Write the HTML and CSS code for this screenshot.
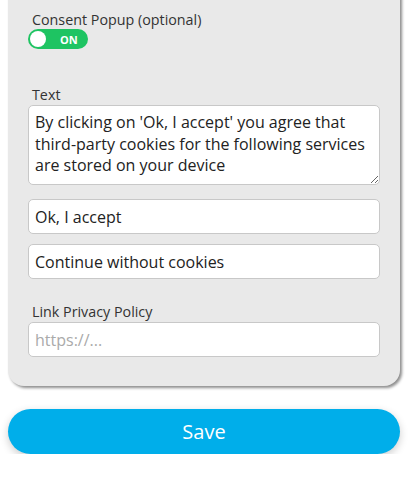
FILE: index.html
```html
<!DOCTYPE html>
<html>
<head>
<meta charset="utf-8">
<link rel="stylesheet" href="styles.css">
</head>
<body>
<div class="panel">
  <div class="field toggle-field">
    <div class="label">Consent Popup (optional)</div>
    <div class="toggle"><span class="knob"></span><span class="on">ON</span></div>
  </div>
  <div class="field text-field">
    <div class="label">Text</div>
    <textarea class="textarea">By clicking on 'Ok, I accept' you agree that third-party cookies for the following services are stored on your device</textarea>
  </div>
  <div class="inputs">
    <input class="input" type="text" value="Ok, I accept">
    <input class="input" type="text" value="Continue without cookies">
  </div>
  <div class="field link-field">
    <div class="label">Link Privacy Policy</div>
    <input class="input" type="text" placeholder="https://...">
  </div>
</div>
<button class="save">Save</button>
</body>
</html>
```
FILE: styles.css
```css
* { box-sizing: border-box; }
html, body { margin: 0; padding: 0; background: #fff; }
body {
  font-family: "Open Sans", "Noto Sans", sans-serif;
  color: #222;
  padding: 0 10px 0 8px;
}
.panel {
  margin-top: -20px;
  background: #e9e9e9;
  border-radius: 16px;
  padding: 28px 20px 29px 20px;
  box-shadow: 2px 2px 3px rgba(0,0,0,0.45);
  display: flex;
  flex-direction: column;
}
.label {
  font-size: 14.3px;
  line-height: 18px;
  color: #333;
  padding-left: 4px;
}
.toggle-field .label { margin-top: 3px; }
.toggle {
  margin-top: 0;
  width: 60px;
  height: 20px;
  border-radius: 10px;
  background: #1ec462;
  position: relative;
  display: flex;
  align-items: center;
}
.knob {
  position: absolute;
  left: 2px;
  top: 2px;
  width: 16px;
  height: 16px;
  border-radius: 50%;
  background: #fff;
}
.on {
  margin-left: 32px;
  font-size: 11px;
  font-weight: 700;
  color: #fff;
  font-family: "Open Sans", sans-serif;
}
.text-field { margin-top: 37px; }
.text-field .label { margin-bottom: 1px; }
.textarea {
  display: block;
  width: 100%;
  height: 80px;
  resize: vertical;
  background: #fff;
  border: 1px solid #c8c8c8;
  border-radius: 5px;
  font-family: "Open Sans", sans-serif;
  font-size: 16px;
  line-height: 21.6px;
  color: #222;
  padding: 6px 6px;
  overflow: hidden;
}
.inputs {
  margin-top: 14px;
  display: flex;
  flex-direction: column;
  gap: 10px;
}
.input {
  display: block;
  width: 100%;
  height: 35px;
  background: #fff;
  border: 1px solid #c8c8c8;
  border-radius: 5px;
  font-family: "Open Sans", sans-serif;
  font-size: 16px;
  color: #222;
  padding: 0 6px;
}
.input::placeholder { color: #aaa; }
.link-field { margin-top: 24px; }
.link-field .label { margin-bottom: 1px; }
.save {
  display: block;
  width: 392px;
  margin-top: 23px;
  height: 45px;
  border: none;
  border-radius: 23px;
  background: #00aeea;
  color: #fff;
  font-family: "Open Sans", sans-serif;
  font-size: 20px;
  box-shadow: 0 3px 8px rgba(0,0,0,0.2);
}
```
